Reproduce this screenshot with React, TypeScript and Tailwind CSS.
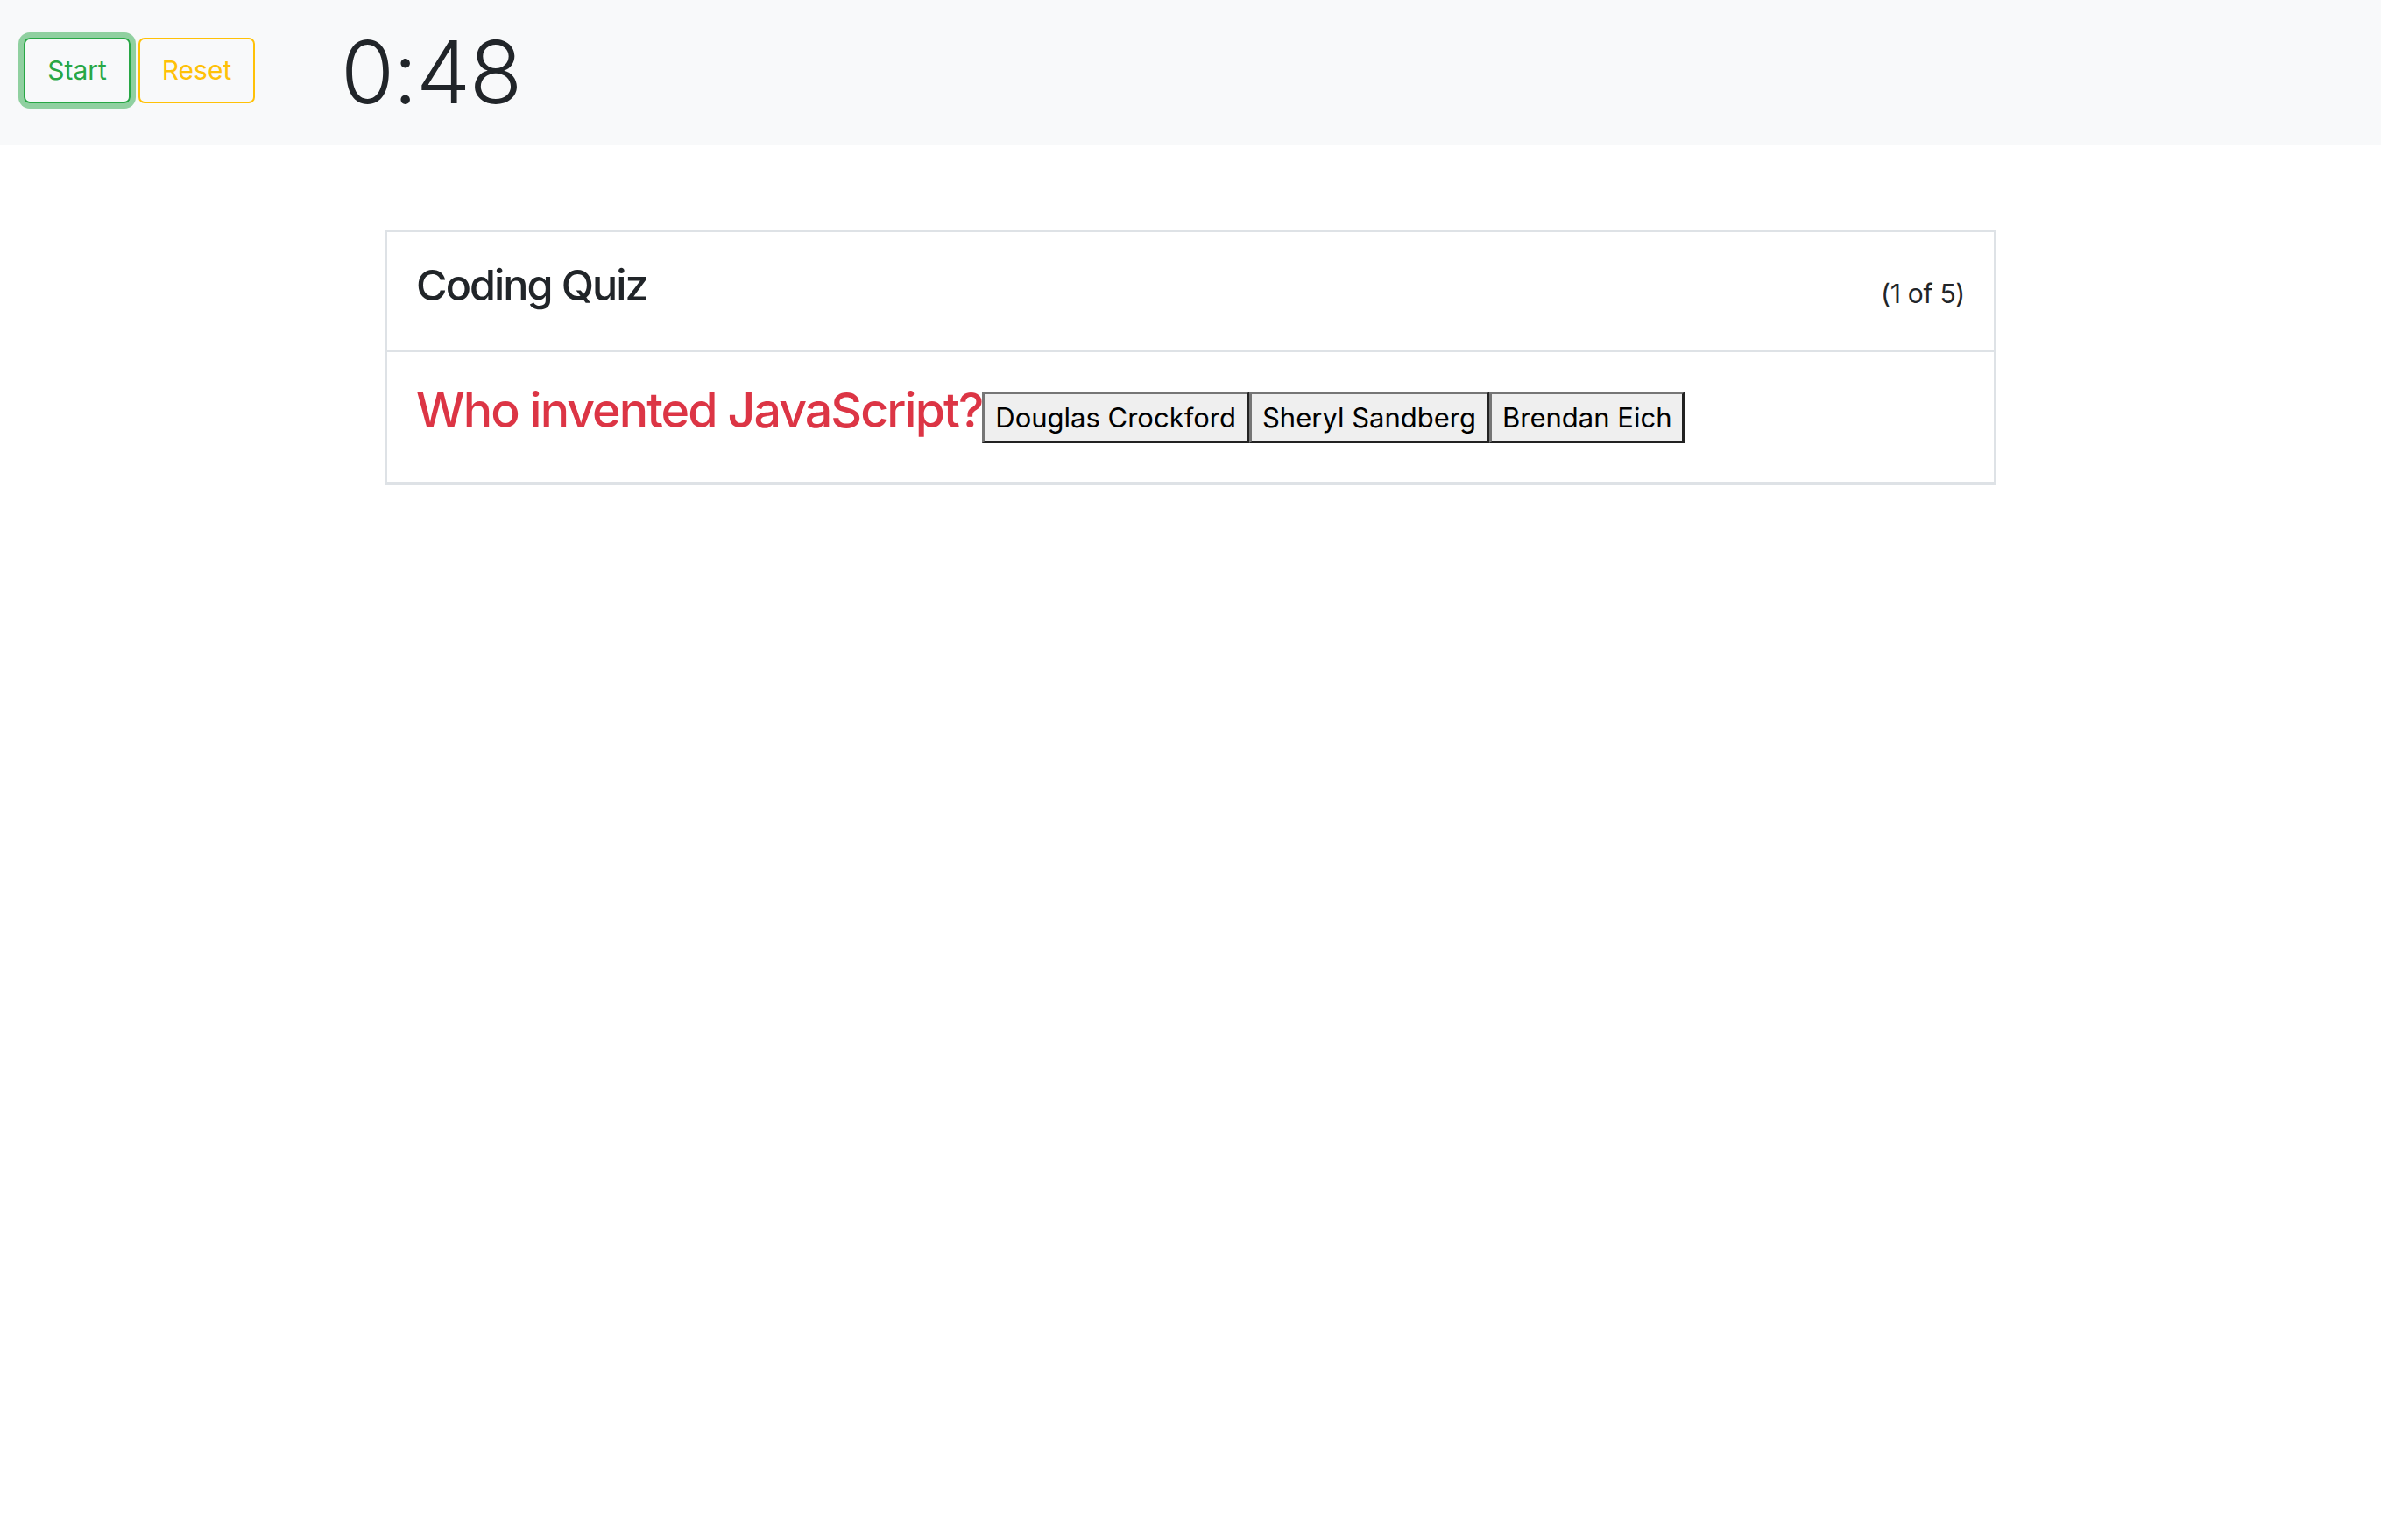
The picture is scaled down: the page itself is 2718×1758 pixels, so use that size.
const answers = ["Douglas Crockford", "Sheryl Sandberg", "Brendan Eich"];

export default function App() {
  return (
    <div className="min-h-screen bg-white text-[#212529] font-['Inter',sans-serif]">
      <header className="flex h-[165px] items-center bg-[#f8f9fa] pl-[27px]">
        <div className="-mt-[4px] flex items-center gap-[9px]">
          <button className="h-[75px] w-[122px] rounded-[7px] border-2 border-[#28a745] bg-transparent text-[30px] text-[#28a745] shadow-[0_0_0_6px_rgba(40,167,69,0.5)]">
            Start
          </button>
          <button className="h-[75px] w-[133px] rounded-[7px] border-2 border-[#ffc107] bg-transparent text-[30px] text-[#ffc107]">
            Reset
          </button>
        </div>
        <div className="ml-[98px] text-[99px] font-light leading-none tracking-[-1.5px]">0:48</div>
      </header>

      <main className="flex justify-center pt-[98px]">
        <div className="w-[1838px] border-2 border-b-4 border-[#dee2e6] bg-white">
          <div className="flex h-[137px] items-center justify-between border-b-2 border-[#dee2e6] px-[33px]">
            <h3 className="-mt-[12px] text-[48.5px] font-medium leading-[1.2] tracking-[-0.04em]">Coding Quiz</h3>
            <span className="mt-[5px] text-[30px] tracking-[-0.01em]">(1 of 5)</span>
          </div>
          <div className="px-[33px] pt-[33px] pb-[44px]">
            <h2 className="text-[55.5px] font-medium leading-[1.2] tracking-[-0.035em] text-[#dc3545]">
              Who invented JavaScript?
              {answers.map((a) => (
                <button
                  key={a}
                  className="inline-block h-[59px] border-[3.5px] border-t-[#767676] border-l-[#767676] border-r-[#222222] border-b-[#222222] bg-[#efefef] px-[12px] align-baseline text-[31px] font-normal leading-none tracking-normal text-black"
                >
                  {a}
                </button>
              ))}
            </h2>
          </div>
        </div>
      </main>
    </div>
  );
}
